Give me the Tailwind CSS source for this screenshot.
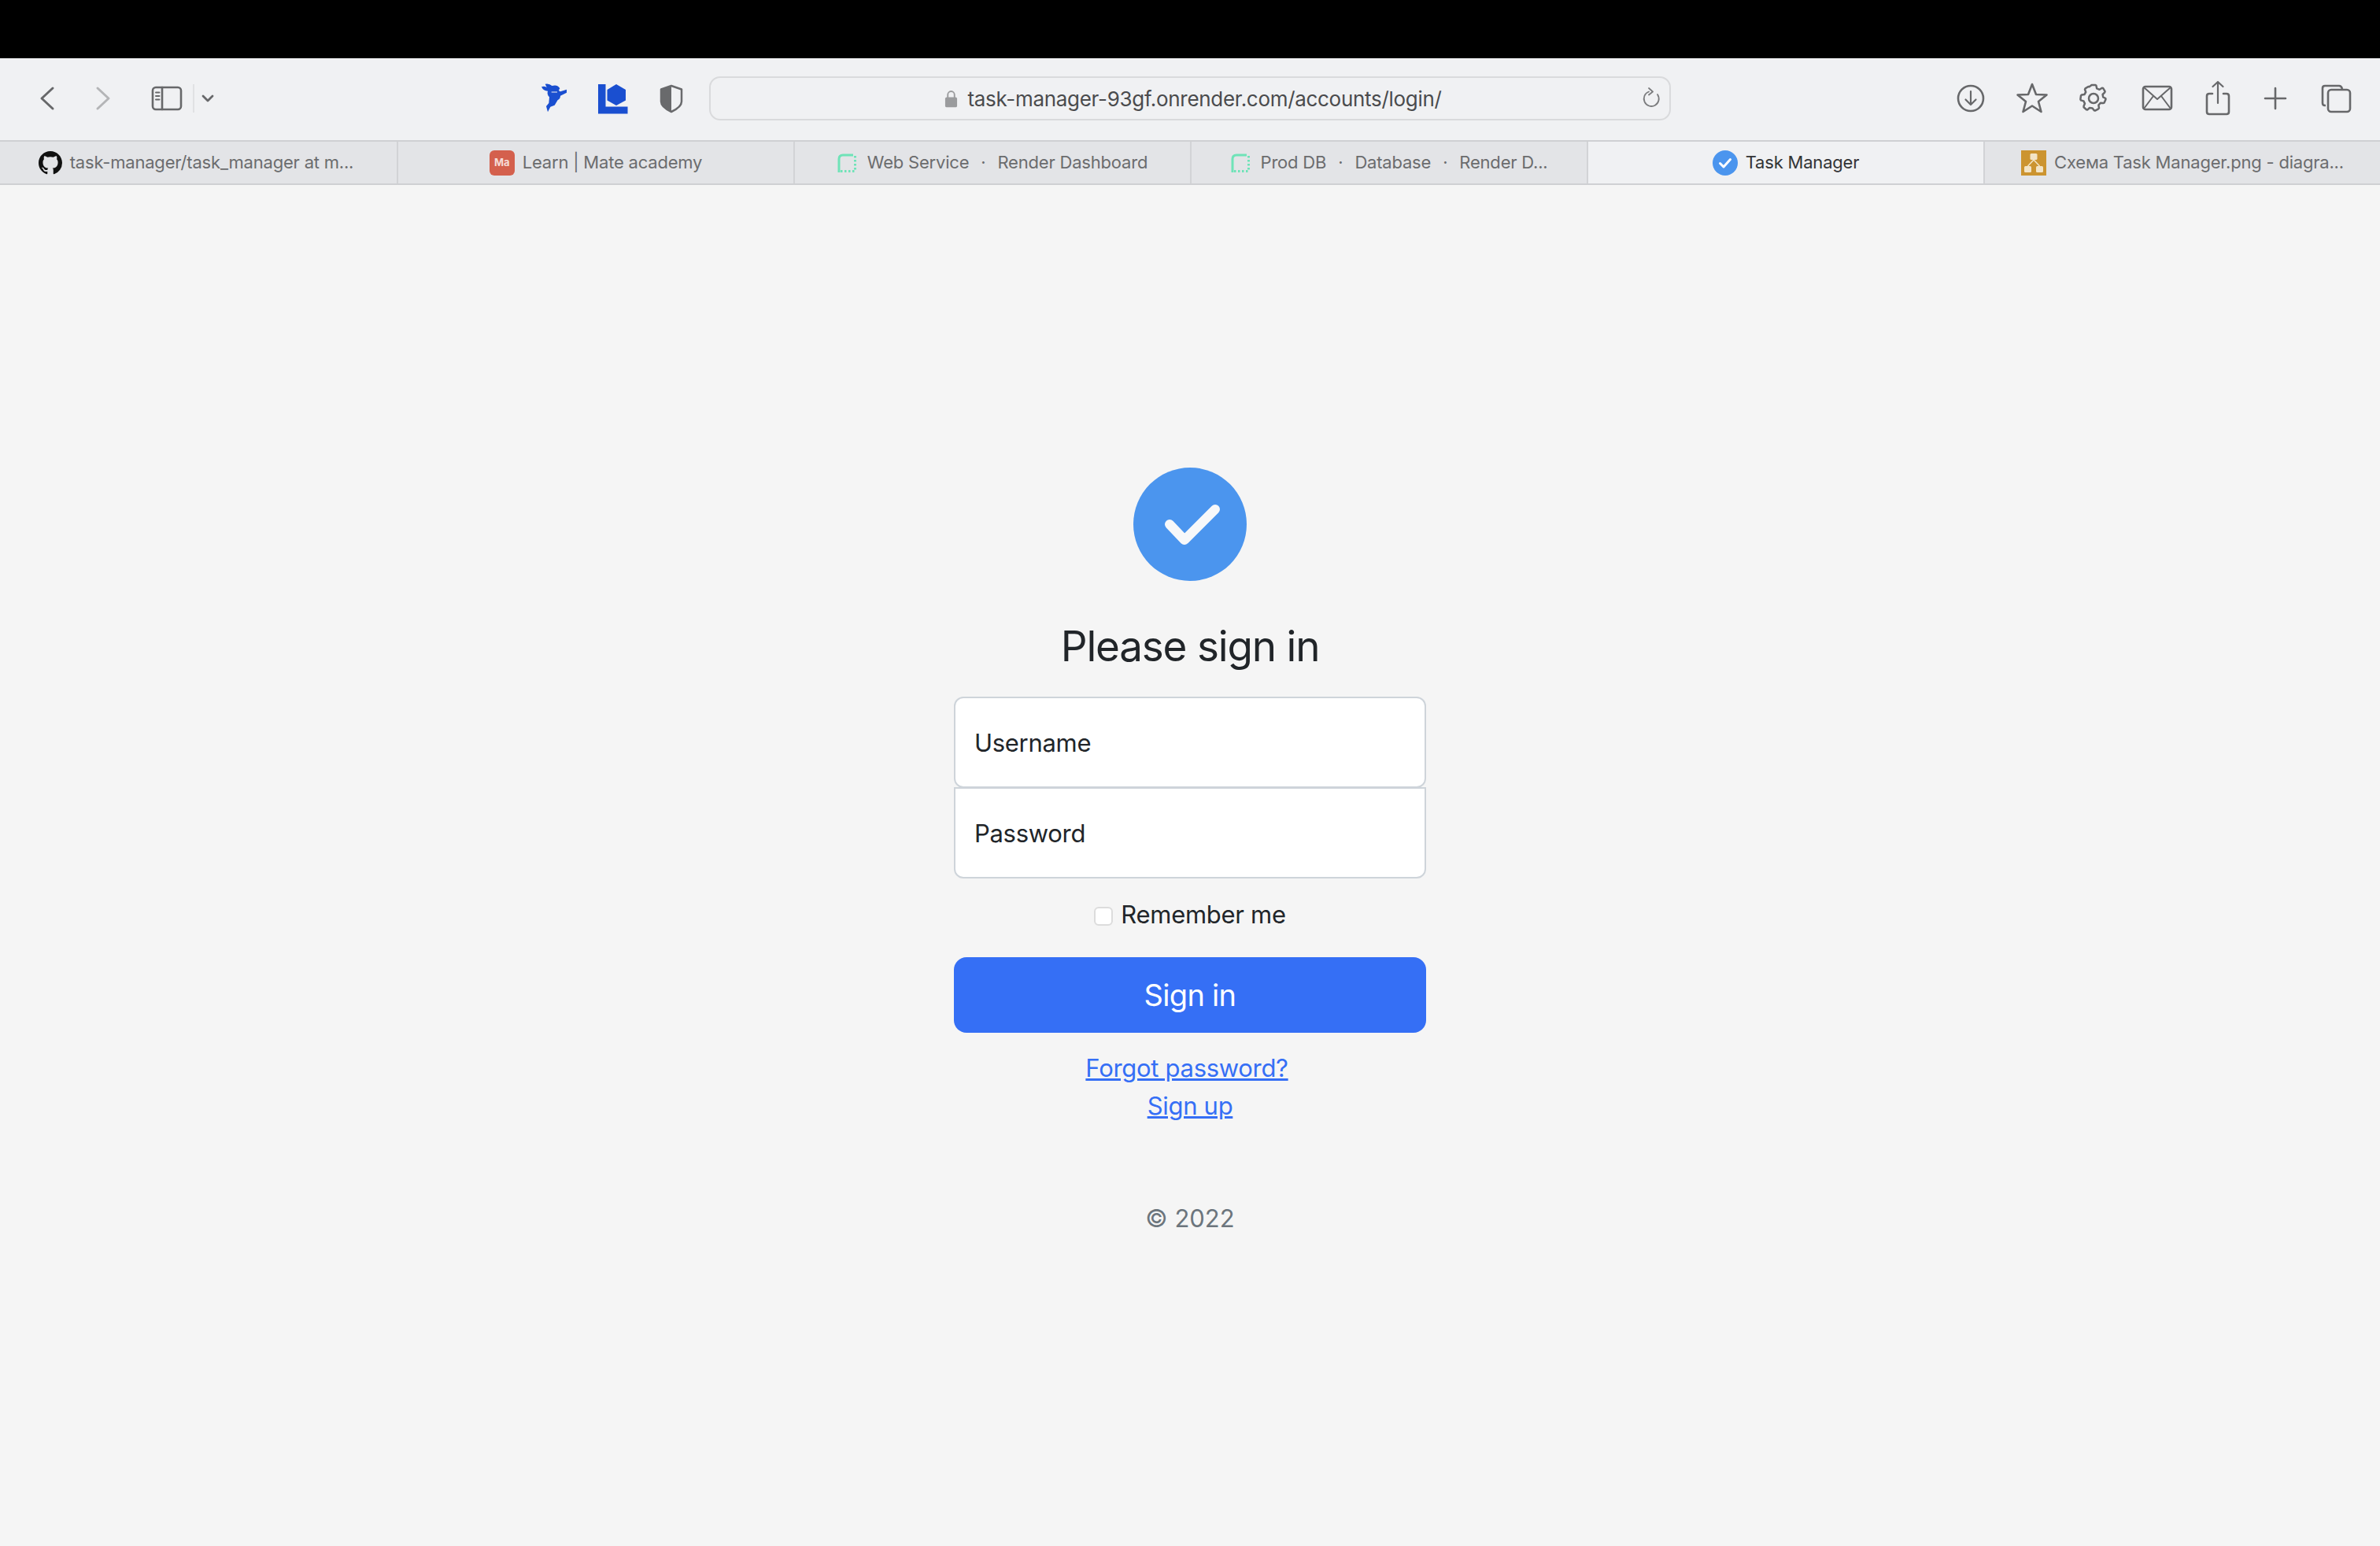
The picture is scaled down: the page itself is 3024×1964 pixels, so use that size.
<!DOCTYPE html>
<html lang="en">
<head>
  <meta charset="UTF-8" />
  <title>Task Manager</title>
  <script src="https://cdn.jsdelivr.net/npm/@tailwindcss/browser@4"></script>
</head>
<body class="bg-[#f5f5f5] min-h-screen font-['Inter',sans-serif] text-[#212529]">

  <!-- top black strip -->
  <div class="h-[74px] bg-black"></div>

  <!-- safari toolbar -->
  <div class="h-[104px] pb-[2px] bg-[#f0f1f3] flex items-center text-[#67686a]">
    <div class="w-12 h-12 shrink-0 ml-[36px]">
      <svg viewBox="0 0 48 48" class="w-12 h-12" fill="none" stroke="currentColor" stroke-width="3" stroke-linecap="round" stroke-linejoin="round"><path d="M31 11 L17 24 L31 37"/></svg>
    </div>
    <div class="w-12 h-12 shrink-0 ml-[21px] text-[#b4b5b7]">
      <svg viewBox="0 0 48 48" class="w-12 h-12" fill="none" stroke="currentColor" stroke-width="3" stroke-linecap="round" stroke-linejoin="round"><path d="M19 11 L33 24 L19 37"/></svg>
    </div>
    <div class="w-12 h-12 shrink-0 ml-[33px]">
      <svg viewBox="0 0 48 48" class="w-12 h-12" fill="none" stroke="currentColor" stroke-linecap="round"><rect x="8" y="10" width="36" height="28" rx="4" stroke-width="2.600"/><path d="M20 10 V38" stroke-width="2.600"/><path d="M12 16.500 H16.500 M12 21 H16.500 M12 25.500 H16.500" stroke-width="2"/></svg>
    </div>
    <div class="w-[2px] h-9 bg-[#e0e1e3] shrink-0 ml-[11px]"></div>
    <div class="w-12 h-12 shrink-0 -ml-[7px]">
      <svg viewBox="0 0 48 48" class="w-12 h-12" fill="none" stroke="currentColor" stroke-width="2.800" stroke-linecap="round" stroke-linejoin="round"><path d="M18 21 L24 27 L30 21"/></svg>
    </div>

    <!-- extensions -->
    <div class="w-12 h-12 shrink-0 ml-[392px] flex items-center justify-center">
      <svg viewBox="76 50 120 120" class="w-[40px] h-[40px]" fill="#1a4fd0"><path d="M88 66 Q98 62 108 68 L102 55 Q118 52 128 62 Q150 56 158 72 Q150 82 160 84 L184 76 L184 88 L160 100 Q160 112 150 116 L138 136 L122 142 L112 162 L106 140 L116 128 L118 105 Q108 95 112 82 Q95 82 88 66 Z"/><path d="M126 86 H148" stroke="#f0f1f3" stroke-width="3"/></svg>
    </div>
    <div class="w-12 h-12 shrink-0 ml-[27px]">
      <svg viewBox="0 0 48 48" class="w-12 h-12" fill="#1a4fd0"><path d="M5 6 H14.500 V34.500 H42.500 V43.500 H5 Z"/><path d="M28 6 L40 13 V26.500 L28 33 L16.500 26.500 V13 Z"/></svg>
    </div>
    <div class="w-12 h-12 shrink-0 ml-[26px]">
      <svg viewBox="0 0 48 48" class="w-12 h-12"><path d="M24 8 L37 12.500 V28 Q37 35 24 41 Q11 35 11 28 V12.500 Z" fill="none" stroke="#696a6c" stroke-width="2.500" stroke-linejoin="round"/><path d="M24 8 L11 12.500 V28 Q11 35 24 41 Z" fill="#696a6c"/></svg>
    </div>

    <!-- address bar -->
    <div class="w-[1222px] h-[56px] shrink-0 ml-[24px] pl-[8px] pt-[1px] border-2 border-[#d9dadc] rounded-[14px] flex items-center justify-center relative">
      <svg viewBox="0 0 18 24" class="w-[17px] h-[23px] mr-[12px]"><path d="M4.500 11 V6.500 A4.500 4.500 0 0 1 13.500 6.500 V11" fill="none" stroke="#9a9b9d" stroke-width="2"/><rect x="1" y="10" width="16" height="13.500" rx="2" fill="#9a9b9d"/></svg>
      <span class="text-[26px] text-[#4a4b4d] tracking-[-0.3px]">task-manager-93gf.onrender.com/accounts/login/</span>
      <svg viewBox="0 0 24 28" class="absolute right-[11px] top-[12px] w-[24px] h-[28px]" fill="none" stroke="#7b7c7e" stroke-width="1.800" stroke-linecap="round" stroke-linejoin="round"><path d="M9 5.500 A9.500 9.500 0 1 0 20 9"/><path d="M9 1 L14 5.500 L9 9.500"/></svg>
    </div>

    <!-- right icons -->
    <div class="w-12 h-12 shrink-0 ml-[357px]">
      <svg viewBox="0 0 48 48" class="w-12 h-12" fill="none" stroke="currentColor" stroke-width="2.600" stroke-linecap="round" stroke-linejoin="round"><circle cx="24" cy="24" r="16"/><path d="M24 15 V32 M17.500 25.500 L24 32 L30.500 25.500" stroke-width="2.200"/></svg>
    </div>
    <div class="w-12 h-12 shrink-0 ml-[30px]">
      <svg viewBox="0 0 48 48" class="w-12 h-12" fill="none" stroke="currentColor" stroke-width="2.600" stroke-linejoin="round"><path d="M24 6 L29 19 L42.500 19.500 L32 28 L35.500 41 L24 33.500 L12.500 41 L16 28 L5.500 19.500 L19 19 Z"/></svg>
    </div>
    <div class="w-12 h-12 shrink-0 ml-[30px]">
      <svg viewBox="0 0 24 24" class="w-12 h-12" fill="none" stroke="currentColor" stroke-width="1.250" stroke-linejoin="round"><circle cx="12" cy="12" r="3"/><path d="M10.300 3.900 L10.800 3.500 H13.200 L13.700 3.900 L14.100 5.700 L15.800 6.400 L17.400 5.400 L18.100 5.500 L19.300 7.600 L19.100 8.200 L17.800 9.500 L18.100 11.200 L19.700 12 L19.700 12.700 L18.800 14.800 L18.100 15 L16.400 14.900 L15.200 16.300 L15.500 18.100 L15.100 18.700 L13 19.800 L12.400 19.600 L11.300 18.200 L9.500 18 L8.200 19.200 L7.500 19.100 L5.800 17.600 L5.800 16.900 L6.500 15.300 L5.700 13.700 L4 13.200 L3.700 12.600 L4 10.200 L4.500 9.800 L6.200 9.500 L7.100 8 L6.500 6.300 L6.800 5.700 L8.700 4.500 L9.300 4.600 Z"/></svg>
    </div>
    <div class="w-12 h-12 shrink-0 ml-[33px]">
      <svg viewBox="0 0 48 48" class="w-12 h-12" fill="none" stroke="currentColor" stroke-width="2.600" stroke-linejoin="round"><rect x="6" y="9" width="36" height="29" rx="3"/><path d="M7 10 L24 25 L41 10 M7 37 L19 21 M41 37 L29 21" stroke-width="2"/></svg>
    </div>
    <div class="w-12 h-12 shrink-0 ml-[29px]">
      <svg viewBox="0 0 48 48" class="w-12 h-12" fill="none" stroke="currentColor" stroke-width="2.600" stroke-linecap="round" stroke-linejoin="round"><path d="M17 18 H13 Q10 18 10 21 V41 Q10 44 13 44 H35 Q38 44 38 41 V21 Q38 18 35 18 H31"/><path d="M24 30 V3 M17.500 9 L24 3 L30.500 9" stroke-width="2.200"/></svg>
    </div>
    <div class="w-12 h-12 shrink-0 ml-[25px]">
      <svg viewBox="0 0 48 48" class="w-12 h-12" fill="none" stroke="currentColor" stroke-width="2.600" stroke-linecap="round"><path d="M24 11 V37 M11 24 H37"/></svg>
    </div>
    <div class="w-12 h-12 shrink-0 ml-[29px]">
      <svg viewBox="0 0 48 48" class="w-12 h-12" fill="none" stroke="currentColor" stroke-width="2.600" stroke-linejoin="round"><path d="M11 33 H10 Q7 33 7 30 V11 Q7 8 10 8 H28 Q31 8 32 12"/><rect x="14" y="13" width="28" height="28" rx="4"/></svg>
    </div>
  </div>

  <!-- tab bar -->
  <div class="h-[57px] grid grid-cols-6 text-[22px] tracking-[-0.2px] text-[#6b6c6e] border-t-2 border-[#cfd0d3] border-b-2">
    <div class="bg-[#e3e4e7] pr-[6px] flex items-center justify-center gap-[10px]">
      <svg viewBox="0 0 16 16" class="w-[30px] h-[30px]" fill="#111"><path d="M8 0C3.580 0 0 3.580 0 8c0 3.540 2.290 6.530 5.470 7.590.4.070.55-.17.55-.38 0-.19-.01-.82-.01-1.490-2.010.37-2.530-.49-2.690-.94-.09-.23-.48-.94-.82-1.130-.28-.15-.68-.52-.01-.53.63-.01 1.080.58 1.230.82.720 1.210 1.870.870 2.330.660.070-.520.280-.870.510-1.070-1.780-.2-3.640-.89-3.640-3.950 0-.870.310-1.590.820-2.150-.080-.2-.360-1.020.080-2.120 0 0 .670-.210 2.200.820.640-.180 1.320-.270 2-.270.680 0 1.360.090 2 .270 1.530-1.040 2.200-.820 2.200-.820.440 1.100.160 1.920.080 2.120.510.560.820 1.270.820 2.150 0 3.070-1.870 3.750-3.650 3.950.290.250.540.730.540 1.480 0 1.070-.010 1.930-.010 2.200 0 .210.150.460.550.380A8.013 8.013 0 0016 8c0-4.420-3.580-8-8-8z"/></svg>
      <span>task-manager/task_manager at m...</span>
    </div>
    <div class="bg-[#e3e4e7] border-l-2 border-[#d2d3d6] flex items-center justify-center gap-[10px]">
      <div class="w-[32px] h-[32px] rounded-[6px] bg-[#d4604d] flex items-center justify-center text-[#f6dcd7] text-[13px] font-bold tracking-normal">Ma</div>
      <span>Learn | Mate academy</span>
    </div>
    <div class="bg-[#e3e4e7] border-l-2 border-[#d2d3d6] flex items-center justify-center gap-[14px]">
      <svg viewBox="0 0 24 24" class="w-[24px] h-[24px]" fill="none" stroke="#6fe3b8" stroke-width="3"><path d="M2 24 V7 Q2 2 7 2 H20"/><path d="M22.500 3 V23 M4 22.500 H23" stroke-dasharray="2.500 2.500"/></svg>
      <span>Web Service<span class="mx-[15px]">·</span>Render Dashboard</span>
    </div>
    <div class="bg-[#e3e4e7] border-l-2 border-[#d2d3d6] flex items-center justify-center gap-[14px]">
      <svg viewBox="0 0 24 24" class="w-[24px] h-[24px]" fill="none" stroke="#6fe3b8" stroke-width="3"><path d="M2 24 V7 Q2 2 7 2 H20"/><path d="M22.500 3 V23 M4 22.500 H23" stroke-dasharray="2.500 2.500"/></svg>
      <span>Prod DB<span class="mx-[15px]">·</span>Database<span class="mx-[15px]">·</span>Render D...</span>
    </div>
    <div class="bg-[#f0f1f3] border-l-2 border-[#d2d3d6] flex items-center justify-center gap-[10px] text-[#333436]">
      <svg viewBox="0 0 32 32" class="w-[32px] h-[32px]"><circle cx="16" cy="16" r="16" fill="#4b95ee"/><path d="M9.500 16.500 L14 21 L22.500 11.500" fill="none" stroke="#fff" stroke-width="3" stroke-linecap="round" stroke-linejoin="round"/></svg>
      <span>Task Manager</span>
    </div>
    <div class="bg-[#e3e4e7] border-l-2 border-[#d2d3d6] flex items-center justify-center gap-[10px]">
      <svg viewBox="0 0 32 32" class="w-[32px] h-[32px]"><rect width="32" height="32" fill="#cc9430"/><g fill="#f3e4c6"><rect x="11.500" y="4" width="9" height="8" rx="1.500"/><rect x="4" y="20" width="9" height="8" rx="1.500"/><rect x="19" y="20" width="9" height="8" rx="1.500"/></g><path d="M16 12 L8.500 20 M16 12 L23.500 20" stroke="#f3e4c6" stroke-width="1.500"/></svg>
      <span>Схема Task Manager.png - diagra...</span>
    </div>
  </div>

  <!-- login form -->
  <main class="w-[600px] mx-auto pt-[359px] flex flex-col items-center text-center">
    <div class="w-[144px] h-[144px] rounded-full bg-[#4b95ee]">
      <svg viewBox="0 0 144 144" class="w-[144px] h-[144px]" fill="none" stroke="#f7f8fa" stroke-width="12" stroke-linecap="round" stroke-linejoin="round"><path d="M46 72 L65 92 L104 53"/></svg>
    </div>
    <h1 class="mt-[50px] mb-[30px] text-[53px] leading-[67px] font-normal tracking-[-1.2px]">Please sign in</h1>

    <input type="text" placeholder="Username" class="w-full h-[116px] bg-white border-2 border-[#ced4da] rounded-[12px] px-[24px] text-[31px] tracking-[-0.3px] placeholder:text-[#212529]" />
    <input type="password" placeholder="Password" class="w-full h-[116px] -mt-[1px] bg-white border-2 border-[#ced4da] rounded-b-[12px] px-[24px] text-[31px] tracking-[-0.3px] placeholder:text-[#212529]" />

    <label class="mt-[22px] h-[48px] flex items-center justify-center gap-[10px] text-[31px] tracking-[-0.3px]">
      <input type="checkbox" class="appearance-none w-[24px] h-[24px] mt-[4px] bg-white border-2 border-[#dcdcdc] rounded-[6px]" />
      <span>Remember me</span>
    </label>

    <button class="mt-[30px] w-full h-[96px] rounded-[16px] bg-[#356ff5] text-white text-[38px] tracking-[-0.7px]">Sign in</button>

    <a href="#" class="mt-[21px] mr-[8px] text-[31px] tracking-[-0.3px] leading-[48px] text-[#356ff5] underline">Forgot password?</a>
    <a href="#" class="text-[31px] tracking-[-0.3px] leading-[48px] text-[#356ff5] underline">Sign up</a>

    <p class="mt-[95px] text-[31px] leading-[48px] text-[#6c757d]">© 2022</p>
  </main>

</body>
</html>
